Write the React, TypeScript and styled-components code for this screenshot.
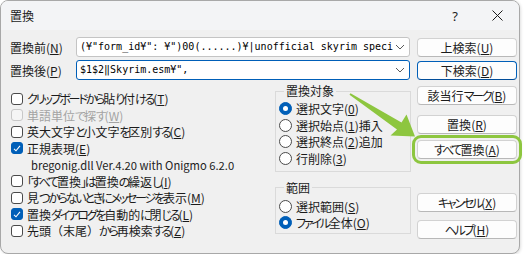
import React from 'react';
import styled, { createGlobalStyle } from 'styled-components';

const GlobalStyle = createGlobalStyle`
  html, body {
    margin: 0;
    padding: 0;
    background: #ffffff;
  }
  body {
    font-family: "Noto Sans CJK JP", "Noto Sans", sans-serif;
    font-size: 12px;
    color: #1b1b1b;
  }
  * {
    box-sizing: border-box;
  }
`;

const Window = styled.div`
  position: relative;
  width: 520px;
  height: 254px;
  border: 1px solid #a8a8a8;
  border-radius: 8px;
  background: #f0f0f0;
  box-shadow: 1px 1px 3px rgba(0, 0, 0, 0.12);
`;

const TitleBar = styled.div`
  display: flex;
  align-items: center;
  height: 29px;
  padding-left: 9px;
  padding-right: 1px;
  background: #f3f4f6;
  border-radius: 7px 7px 0 0;
`;

const Title = styled.span`
  flex: 1;
  font-size: 12px;
`;

const CaptionButton = styled.span`
  display: flex;
  align-items: center;
  justify-content: center;
  width: 42px;
  height: 29px;
  font-family: "Noto Sans", sans-serif;
  font-size: 13px;
`;

const Body = styled.div`
  padding: 7px 2px 0 9px;
`;

const FieldRow = styled.div`
  display: grid;
  grid-template-columns: 66px 334px 1fr;
  align-items: center;
  justify-items: start;
  height: 20px;
  margin-bottom: 3px;

  & > button {
    justify-self: end;
  }
`;

const FieldLabel = styled.span`
  font-size: 12px;
  white-space: nowrap;
`;

const Combo = styled.div<{ $focused?: boolean }>`
  display: flex;
  align-items: center;
  width: 100%;
  height: 20px;
  background: #ffffff;
  border: 1px solid ${(p) => (p.$focused ? '#005fb8' : '#c4c4c4')};
  border-radius: 3px;
  padding: 0 4px 0 3px;
`;

const ComboText = styled.span`
  flex: 1;
  overflow: hidden;
  white-space: pre;
  font-family: "DejaVu Sans Mono", "Liberation Mono", monospace;
  font-size: 10px;
  line-height: 16px;
  color: #000000;
`;

const Button = styled.button<{ $default?: boolean; $mt?: number; $highlight?: boolean }>`
  display: flex;
  align-items: center;
  justify-content: center;
  width: 100px;
  height: 19px;
  margin-top: ${(p) => p.$mt ?? 0}px;
  padding: 0;
  background: #fdfdfd;
  border: 1px solid ${(p) => (p.$default ? '#005fb8' : '#d2d2d2')};
  border-bottom-color: ${(p) => (p.$default ? '#004c99' : '#b8b8b8')};
  border-radius: 4px;
  font-family: inherit;
  font-size: 12px;
  color: #1b1b1b;
  white-space: nowrap;
  outline: ${(p) => (p.$highlight ? '3px solid #8dc63f' : 'none')};
  outline-offset: 2px;
`;

const Key = styled.span`
  text-decoration: underline;
  text-underline-offset: 1px;
`;

const Kana = styled.span`
  font-feature-settings: "palt";
  letter-spacing: -2.2px;
`;

const Lower = styled.div`
  display: grid;
  grid-template-columns: 265px 136px 1fr;
  margin-top: 3px;
`;

const CheckList = styled.div`
  display: flex;
  flex-direction: column;
  padding-top: 7.5px;
`;

const CheckRow = styled.div<{ $disabled?: boolean }>`
  display: flex;
  align-items: center;
  gap: 4px;
  height: 16.5px;
  padding-left: 1px;
  white-space: nowrap;
  color: ${(p) => (p.$disabled ? '#a3a3a3' : '#1b1b1b')};
`;

const Box = styled.span<{ $checked?: boolean; $disabled?: boolean }>`
  display: flex;
  align-items: center;
  justify-content: center;
  width: 12px;
  height: 12px;
  border-radius: 3px;
  border: 1px solid ${(p) => (p.$checked ? '#005fb8' : p.$disabled ? '#c8c8c8' : '#4a4a4a')};
  background: ${(p) => (p.$checked ? '#005fb8' : p.$disabled ? '#f5f5f5' : '#ffffff')};
`;

const Note = styled.div`
  height: 16.5px;
  display: flex;
  align-items: center;
  padding-left: 21px;
  font-size: 11.2px;
  color: #222222;
`;

const Middle = styled.div`
  display: flex;
  flex-direction: column;
  gap: 8px;
`;

const Group = styled.fieldset<{ $pt: number; $pb: number }>`
  margin: 0;
  border: 1px solid #dadada;
  border-radius: 0;
  padding: ${(p) => p.$pt}px 0 ${(p) => p.$pb}px 3px;
`;

const Legend = styled.legend`
  margin-left: 5px;
  padding: 0 2px;
  font-size: 12px;
  line-height: 16px;
`;

const RadioRow = styled.div`
  display: flex;
  align-items: center;
  gap: 4px;
  height: 16.7px;
  white-space: nowrap;
`;

const RadioDot = styled.span<{ $checked?: boolean }>`
  display: flex;
  align-items: center;
  justify-content: center;
  width: 13px;
  height: 13px;
  border-radius: 50%;
  border: 1px solid ${(p) => (p.$checked ? '#005fb8' : '#4a4a4a')};
  background: ${(p) => (p.$checked ? '#005fb8' : '#ffffff')};

  &::after {
    content: '';
    display: ${(p) => (p.$checked ? 'block' : 'none')};
    width: 5px;
    height: 5px;
    border-radius: 50%;
    background: #ffffff;
  }
`;

const ButtonColumn = styled.div`
  display: flex;
  flex-direction: column;
  align-items: flex-end;
`;

const Arrow = styled.svg`
  position: absolute;
  left: 340px;
  top: 85px;
  width: 90px;
  height: 60px;
  pointer-events: none;
`;

// kana runs get proportional widths, like the narrow kana of the UI font
const jp = (s: string) =>
  s
    .split(/([\u3040-\u30ff「」]+)/)
    .map((part, i) => (/[\u3040-\u30ff「」]/.test(part) ? <Kana key={i}>{part}</Kana> : part));

const Chevron = () => (
  <svg width='10' height='6' viewBox='0 0 10 6'>
    <path d='M1 1l4 4 4-4' fill='none' stroke='#5a5a5a' strokeWidth='1' />
  </svg>
);

const Check = () => (
  <svg width='8' height='7' viewBox='0 0 8 7'>
    <path d='M1 3.8l2 2 4-5' fill='none' stroke='#ffffff' strokeWidth='1.1' />
  </svg>
);

type Item = { text: string; key: string; checked?: boolean; disabled?: boolean };

const checks: Item[] = [
  { text: 'クリップボードから貼り付ける(', key: 'T' },
  { text: '単語単位で探す(', key: 'W', disabled: true },
  { text: '英大文字と小文字を区別する(', key: 'C' },
  { text: '正規表現(', key: 'E', checked: true },
];

const checks2: Item[] = [
  { text: '「すべて置換」は置換の繰返し(', key: 'I' },
  { text: '見つからないときにメッセージを表示(', key: 'M' },
  { text: '置換ダイアログを自動的に閉じる(', key: 'L', checked: true },
  { text: '先頭（末尾）から再検索する(', key: 'Z' },
];

const CheckItem: React.FC<{ item: Item }> = ({ item }) => (
  <CheckRow $disabled={item.disabled}>
    <Box $checked={item.checked} $disabled={item.disabled}>
      {item.checked && <Check />}
    </Box>
    <span>
      {jp(item.text)}
      <Key>{item.key}</Key>)
    </span>
  </CheckRow>
);

const Radio: React.FC<{ checked?: boolean; label: string; k: string; rest?: string }> = ({ checked, label, k, rest }) => (
  <RadioRow>
    <RadioDot $checked={checked} />
    <span>
      {jp(label)}(<Key>{k}</Key>){rest}
    </span>
  </RadioRow>
);

const Btn: React.FC<{ label: string; k: string; $default?: boolean; $mt?: number; $highlight?: boolean }> = ({
  label,
  k,
  ...rest
}) => (
  <Button {...rest}>
    {jp(label)}(<Key>{k}</Key>)
  </Button>
);

const App: React.FC = () => {
  return (
    <>
      <GlobalStyle />
      <Window>
        <TitleBar>
          <Title>置換</Title>
          <CaptionButton>?</CaptionButton>
          <CaptionButton>
            <svg width='11' height='11' viewBox='0 0 11 11'>
              <path d='M0.5 0.5l10 10M10.5 0.5l-10 10' stroke='#1b1b1b' strokeWidth='1' />
            </svg>
          </CaptionButton>
        </TitleBar>
        <Body>
          <FieldRow>
            <FieldLabel>
              置換前(<Key>N</Key>)
            </FieldLabel>
            <Combo>
              <ComboText>{'(¥"form_id¥": ¥")00(......)¥|unofficial skyrim speci'}</ComboText>
              <Chevron />
            </Combo>
            <Btn label='上検索' k='U' />
          </FieldRow>
          <FieldRow>
            <FieldLabel>
              置換後(<Key>P</Key>)
            </FieldLabel>
            <Combo $focused>
              <ComboText>{'$1$2‖Skyrim.esm¥",'}</ComboText>
              <Chevron />
            </Combo>
            <Btn label='下検索' k='D' $default />
          </FieldRow>
          <Lower>
            <CheckList>
              {checks.map((c) => (
                <CheckItem key={c.key} item={c} />
              ))}
              <Note>bregonig.dll Ver.4.20 with Onigmo 6.2.0</Note>
              {checks2.map((c) => (
                <CheckItem key={c.key} item={c} />
              ))}
            </CheckList>
            <Middle>
              <Group $pt={1} $pb={4}>
                <Legend>置換対象</Legend>
                <Radio checked label='選択文字' k='0' />
                <Radio label='選択始点' k='1' rest='挿入' />
                <Radio label='選択終点' k='2' rest='追加' />
                <Radio label='行削除' k='3' />
              </Group>
              <Group $pt={2} $pb={2}>
                <Legend>範囲</Legend>
                <Radio label='選択範囲' k='S' />
                <Radio checked label='ファイル全体' k='O' />
              </Group>
            </Middle>
            <ButtonColumn>
              <Btn label='該当行マーク' k='B' $mt={3} />
              <Btn label='置換' k='R' $mt={10} />
              <Btn label='すべて置換' k='A' $mt={6} $highlight />
              <Btn label='キャンセル' k='X' $mt={34} />
              <Btn label='ヘルプ' k='H' $mt={8} />
            </ButtonColumn>
          </Lower>
        </Body>
        <Arrow viewBox='340 85 90 60'>
          <polygon
            points='349.5,92.2 400.5,121.5 405.5,113.5 414,135.5 389.5,134.5 396,128.5 348.5,93.8'
            fill='#8dc63f'
          />
        </Arrow>
      </Window>
    </>
  );
};

export default App;
